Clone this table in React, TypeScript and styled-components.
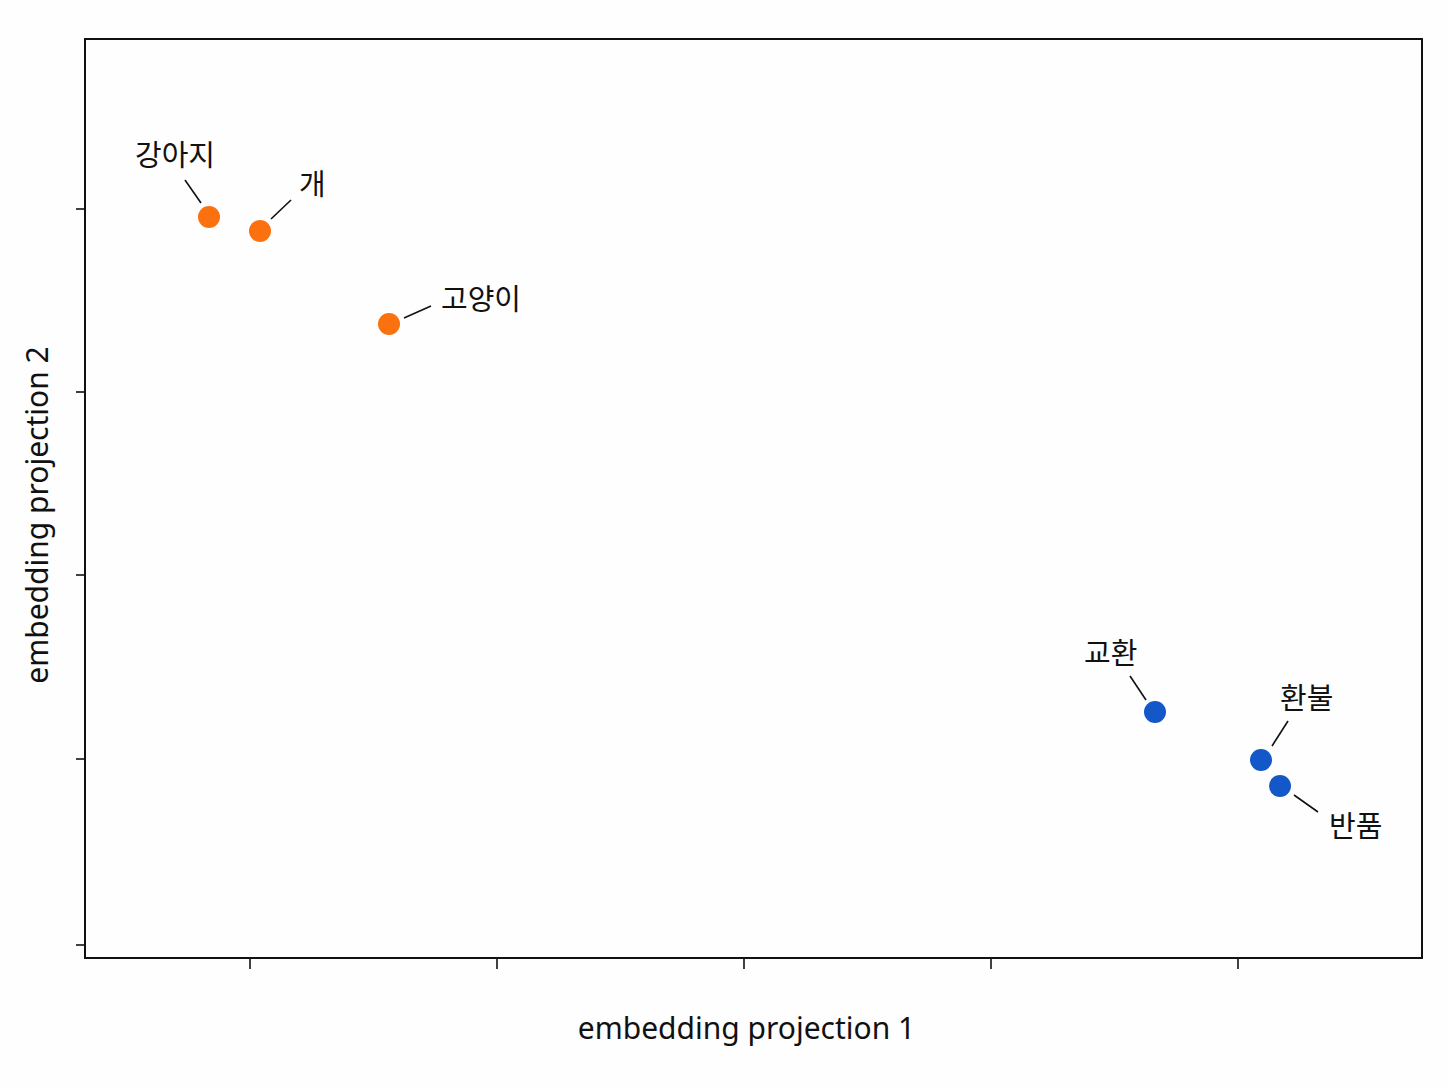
import React from "react";
import styled, { createGlobalStyle } from "styled-components";

const Global = createGlobalStyle`
  html, body { margin: 0; padding: 0; background: #fefefe; }
  body { font-family: "Noto Sans", "Noto Sans CJK KR", sans-serif; color: #111; }
`;

const Figure = styled.div`
  width: 1448px;
  height: 1086px;
  display: grid;
  grid-template-columns: 84px 1339px;
  grid-template-rows: 38px 921px 1fr;
  box-sizing: border-box;
`;

const YLabelCell = styled.div`
  grid-column: 1;
  grid-row: 2;
  display: flex;
  align-items: center;
  justify-content: center;
  padding-right: 10px;
  padding-top: 32px;
`;

const YLabel = styled.div`
  transform: rotate(-90deg);
  white-space: nowrap;
  font-size: 30px;
  line-height: 1;
`;

const PlotCell = styled.div`
  grid-column: 2;
  grid-row: 2;
`;

const PlotSvg = styled.svg`
  display: block;
  overflow: visible;
`;

const XLabelCell = styled.div`
  grid-column: 2;
  grid-row: 3;
  display: flex;
  justify-content: center;
  padding-top: 54px;
  padding-right: 14px;
`;

const XLabel = styled.div`
  font-size: 30px;
  line-height: 1;
`;

type Pt = {
  label: string;
  x: number;
  y: number;
  color: string;
  tx: number;
  ty: number;
  line: [number, number, number, number];
};

const ORANGE = "#fb700f";
const BLUE = "#1357c8";

const points: Pt[] = [
  { label: "강아지", x: 125, y: 179, color: ORANGE, tx: 51, ty: 115, line: [101, 142, 117, 165] },
  { label: "개", x: 176, y: 193, color: ORANGE, tx: 215, ty: 144, line: [187, 181, 207, 162] },
  { label: "고양이", x: 305, y: 286, color: ORANGE, tx: 357, ty: 259, line: [320, 280, 347, 268] },
  { label: "교환", x: 1071, y: 674, color: BLUE, tx: 1000, ty: 613, line: [1046, 638, 1062, 662] },
  { label: "환불", x: 1177, y: 722, color: BLUE, tx: 1196, ty: 658, line: [1188, 708, 1204, 683] },
  { label: "반품", x: 1196, y: 748, color: BLUE, tx: 1245, ty: 786, line: [1210, 757, 1234, 774] },
];

const yTicks = [171, 354, 537, 721, 907];
const xTicks = [166, 413, 660, 907, 1154];

export default function App() {
  return (
    <>
      <Global />
      <Figure>
        <YLabelCell>
          <YLabel>embedding projection 2</YLabel>
        </YLabelCell>
        <PlotCell>
          <PlotSvg width={1339} height={921} viewBox="0 0 1339 921">
            <rect x={1} y={1} width={1337} height={919} fill="none" stroke="#111" strokeWidth={2} />
            {yTicks.map((y) => (
              <line key={"y" + y} x1={-8} y1={y} x2={0} y2={y} stroke="#111" strokeWidth={1.6} />
            ))}
            {xTicks.map((x) => (
              <line key={"x" + x} x1={x} y1={921} x2={x} y2={931} stroke="#111" strokeWidth={1.6} />
            ))}
            {points.map((p) => (
              <g key={p.label}>
                <line
                  x1={p.line[0]}
                  y1={p.line[1]}
                  x2={p.line[2]}
                  y2={p.line[3]}
                  stroke="#111"
                  strokeWidth={1.6}
                />
                <circle cx={p.x} cy={p.y} r={11} fill={p.color} />
                <text
                  x={p.tx}
                  y={p.ty}
                  dominantBaseline="central"
                  fontSize={29}
                  fontFamily='"Noto Sans CJK KR", "Noto Sans", sans-serif'
                  fill="#111"
                >
                  {p.label}
                </text>
              </g>
            ))}
          </PlotSvg>
        </PlotCell>
        <XLabelCell>
          <XLabel>embedding projection 1</XLabel>
        </XLabelCell>
      </Figure>
    </>
  );
}
